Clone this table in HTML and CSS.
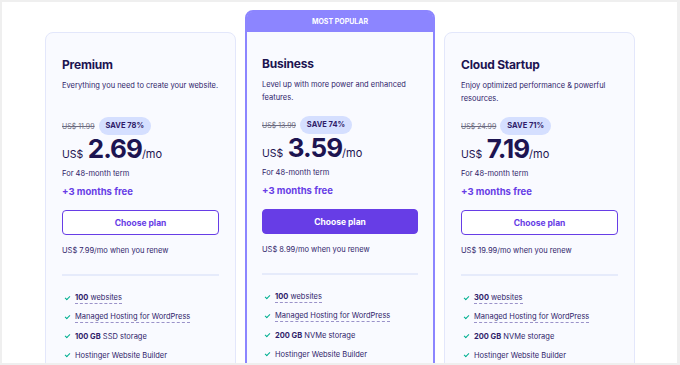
FILE: index.html
```html
<!DOCTYPE html>
<html lang="en">
<head>
    <meta charset="UTF-8">
    <title>Hosting plans</title>
    <link rel="stylesheet" href="styles.css">
</head>
<body>
    <div class="frame">
        <div class="plans">
            <div class="plan">
                <div class="plan-body">
                    <h2>Premium</h2>
                    <p class="desc">Everything you need to create your website.</p>
                    <div class="old-row">
                        <span class="old-price">US$ 11.99</span>
                        <span class="save">SAVE 78%</span>
                    </div>
                    <div class="price"><span class="cur">US$</span> <span class="amount">2.69</span><span class="per">/mo</span></div>
                    <p class="term">For 48-month term</p>
                    <p class="bonus">+3 months free</p>
                    <button class="choose">Choose plan</button>
                    <p class="renew">US$ 7.99/mo when you renew</p>
                    <hr class="divider">
                    <ul class="features">
                        <li><span class="check"></span><span class="feat"><b>100</b> websites</span></li>
                        <li><span class="check"></span><span class="feat">Managed Hosting for WordPress</span></li>
                        <li><span class="check"></span><span><b>100 GB</b> SSD storage</span></li>
                        <li><span class="check"></span><span>Hostinger Website Builder</span></li>
                    </ul>
                </div>
            </div>

            <div class="plan popular">
                <div class="ribbon">MOST POPULAR</div>
                <div class="plan-body">
                    <h2>Business</h2>
                    <p class="desc">Level up with more power and enhanced features.</p>
                    <div class="old-row">
                        <span class="old-price">US$ 13.99</span>
                        <span class="save">SAVE 74%</span>
                    </div>
                    <div class="price"><span class="cur">US$</span> <span class="amount">3.59</span><span class="per">/mo</span></div>
                    <p class="term">For 48-month term</p>
                    <p class="bonus">+3 months free</p>
                    <button class="choose filled">Choose plan</button>
                    <p class="renew">US$ 8.99/mo when you renew</p>
                    <hr class="divider">
                    <ul class="features">
                        <li><span class="check"></span><span class="feat"><b>100</b> websites</span></li>
                        <li><span class="check"></span><span class="feat">Managed Hosting for WordPress</span></li>
                        <li><span class="check"></span><span><b>200 GB</b> NVMe storage</span></li>
                        <li><span class="check"></span><span>Hostinger Website Builder</span></li>
                    </ul>
                </div>
            </div>

            <div class="plan">
                <div class="plan-body">
                    <h2>Cloud Startup</h2>
                    <p class="desc">Enjoy optimized performance &amp; powerful resources.</p>
                    <div class="old-row">
                        <span class="old-price">US$ 24.99</span>
                        <span class="save">SAVE 71%</span>
                    </div>
                    <div class="price"><span class="cur">US$</span> <span class="amount">7.19</span><span class="per">/mo</span></div>
                    <p class="term">For 48-month term</p>
                    <p class="bonus">+3 months free</p>
                    <button class="choose">Choose plan</button>
                    <p class="renew">US$ 19.99/mo when you renew</p>
                    <hr class="divider">
                    <ul class="features">
                        <li><span class="check"></span><span class="feat"><b>300</b> websites</span></li>
                        <li><span class="check"></span><span class="feat">Managed Hosting for WordPress</span></li>
                        <li><span class="check"></span><span><b>200 GB</b> NVMe storage</span></li>
                        <li><span class="check"></span><span>Hostinger Website Builder</span></li>
                    </ul>
                </div>
            </div>
        </div>
    </div>
</body>
</html>
```

FILE: styles.css
```css
body {
    margin: 0;
    font-family: Inter, "Noto Sans", sans-serif;
    color: #2f1c6a;
    background: #efefef;
}

.frame {
    box-sizing: border-box;
    width: 680px;
    height: 365px;
    border: 2px solid #efefef;
    border-right-width: 3px;
    background: #ffffff;
    overflow: hidden;
}

.plans {
    display: grid;
    grid-template-columns: 191px 190px 191px;
    gap: 9px;
    padding: 8px 0 0 43px;
    align-items: start;
}

.plan {
    margin-top: 22px;
    background: #f9faff;
    border: 1px solid #e3e7fb;
    border-radius: 8px;
}

.plan-body {
    padding: 23px 16px 40px;
}

.popular {
    margin-top: 0;
    border: 2px solid #8c85ff;
    border-radius: 8px;
}

.popular .plan-body {
    padding: 23px 15px 40px;
}

.ribbon {
    height: 20px;
    line-height: 19px;
    background: #8c85ff;
    color: #ffffff;
    font-size: 7px;
    font-weight: 700;
    text-align: center;
    border-radius: 5px 5px 0 0;
}

.plan h2 {
    margin: 0;
    font-size: 12px;
    font-weight: 700;
    letter-spacing: -0.2px;
    color: #1d1451;
    line-height: 18px;
}

.desc {
    margin: 5px 0 0;
    font-size: 7.5px;
    line-height: 13px;
    height: 26px;
    color: #2f1c6a;
}

.old-row {
    display: flex;
    align-items: center;
    gap: 4px;
    margin-top: 12px;
}

.old-price {
    font-size: 7px;
    color: #6d6b80;
    text-decoration: line-through;
}

.save {
    background: #d5dfff;
    color: #2f1c6a;
    font-size: 7.5px;
    font-weight: 700;
    padding: 0 7px;
    height: 18px;
    line-height: 18px;
    border-radius: 9px;
}

.price {
    margin-top: 1px;
    color: #1d1451;
    line-height: 26px;
}

.cur {
    font-size: 10.5px;
}

.amount {
    font-size: 26px;
    font-weight: 700;
    letter-spacing: -1px;
}

.per {
    font-size: 11px;
}

.term {
    margin: 0;
    font-size: 7.5px;
    line-height: 12px;
}

.bonus {
    margin: 5px 0 0;
    font-size: 9.5px;
    font-weight: 700;
    color: #673de6;
    line-height: 14px;
}

.choose {
    display: block;
    box-sizing: border-box;
    width: 100%;
    height: 25px;
    margin-top: 11px;
    background: #ffffff;
    border: 1.5px solid #673de6;
    border-radius: 4px;
    color: #673de6;
    font-family: inherit;
    font-size: 8.5px;
    font-weight: 700;
}

.choose.filled {
    background: #673de6;
    color: #ffffff;
}

.renew {
    margin: 10px 0 0;
    font-size: 7.5px;
    line-height: 12px;
}

.divider {
    margin: 17px 0 0;
    border: none;
    height: 1.5px;
    background: #e6ebfb;
}

.features {
    list-style: none;
    margin: 13px 0 0;
    padding: 0;
}

.features li {
    display: flex;
    align-items: center;
    height: 19px;
    font-size: 7.5px;
}

.features b {
    font-weight: 700;
}

.feat {
    border-bottom: 1px dashed #9a92c9;
    line-height: 10px;
}

.check {
    width: 4px;
    height: 2px;
    margin: -2px 5px 0 3px;
    border-left: 1.2px solid #00b090;
    border-bottom: 1.2px solid #00b090;
    transform: rotate(-45deg);
}
```
